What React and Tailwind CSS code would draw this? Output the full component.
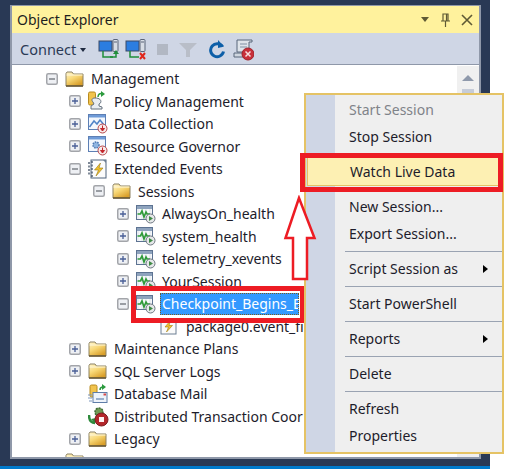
import React from "react";

const uiFont = "font-['Noto_Sans','Open_Sans',sans-serif]";

const indents = {
  0: "pl-[34px]",
  1: "pl-[57px]",
  2: "pl-[81px]",
  3: "pl-[105px]",
  4: "pl-[129px]",
};

function Expander({ open }) {
  return (
    <svg width="12" height="12" viewBox="0 0 12 12" className="shrink-0">
      <rect x="0.75" y="0.75" width="10.5" height="10.5" rx="1.5" fill="#eef0f4" stroke="#a3a5aa" strokeWidth="1.5" />
      <path d={open ? "M3 6h6" : "M3 6h6M6 3v6"} stroke={open ? "#6b7078" : "#4a5f96"} strokeWidth="1.3" />
    </svg>
  );
}

function Folder() {
  return (
    <svg width="19" height="16" viewBox="0 0 19 16">
      <defs>
        <linearGradient id="folderFill" x1="0" y1="0" x2="0.6" y2="1">
          <stop offset="0" stopColor="#fff6cf" />
          <stop offset="0.5" stopColor="#f8d877" />
          <stop offset="1" stopColor="#d99f2b" />
        </linearGradient>
      </defs>
      <path d="M1 2.5 2 1h5l1.5 2H18v12H1z" fill="url(#folderFill)" stroke="#8d8263" />
      <path d="M1.5 4h16" stroke="#fff8dc" />
      <path d="M1 15h17" stroke="#5f5030" strokeWidth="1.4" />
    </svg>
  );
}

function SessionIcon() {
  return (
    <svg width="20" height="20" viewBox="0 0 20 20">
      <rect x="0.5" y="1.5" width="16" height="14" fill="#f5f7fa" stroke="#5d7392" />
      <rect x="1" y="2" width="15" height="3" fill="#8ea3bd" />
      <path d="M2 5v10M6 5v10M10 5v10M14 5v10" stroke="#d5dbe4" strokeWidth="0.7" />
      <path d="M1.5 10h3l1.5-3 2 6 2-5 1 2h3" fill="none" stroke="#2f9a3a" strokeWidth="1.7" />
      <circle cx="14.5" cy="14.5" r="4.5" fill="#e6e8ea" stroke="#6d7680" />
      <path d="M13 12v5l4-2.500z" fill="#3f8a46" />
    </svg>
  );
}

function PackageIcon() {
  return (
    <svg width="18" height="18" viewBox="0 0 18 18">
      <rect x="1" y="2" width="15" height="15" fill="#fbfbfb" stroke="#6d7f93" />
      <path d="M10.500 3.500 5 10h3.500L6.500 15l6-6.500H9z" fill="#f1c232" stroke="#a37d12" strokeWidth="0.6" />
    </svg>
  );
}

function EventsIcon() {
  return (
    <svg width="19" height="20" viewBox="0 0 19 20">
      <rect x="3" y="1" width="15" height="18" fill="#fcfcfc" stroke="#51657e" />
      <path d="M1 3v14M4 2v16" stroke="#3c4c60" strokeWidth="1.3" strokeDasharray="2 1.500" />
      <path d="M12.500 4 6.500 11h4L8 17l7-8h-4z" fill="#f0c02c" stroke="#9b7a15" strokeWidth="0.6" />
      <path d="M15 1h3v3" fill="#6d7f93" />
    </svg>
  );
}

function PolicyIcon() {
  return (
    <svg width="19" height="20" viewBox="0 0 19 20">
      <rect x="0.500" y="1" width="7" height="13" rx="1.500" fill="#f1c34d" stroke="#b88a1f" />
      <path d="M7 7c-3 0-4 2-2 4l1 2-3 2v3h11v-2l-3-1 0-2c3-1 3-6-4-6z" fill="#e9edf2" stroke="#66727f" />
      <path d="M10 6c0-3 2-4 5-3" fill="none" stroke="#2b9a3d" strokeWidth="1.500" />
      <path d="m13 0 4 3-4 3z" fill="#2b9a3d" />
    </svg>
  );
}

function ChartIcon({ gear }) {
  return (
    <svg width="20" height="20" viewBox="0 0 20 20">
      <rect x="0.500" y="0.500" width="17" height="15" fill="#f3f7fd" stroke="#5d7fb4" />
      <rect x="1" y="1" width="16" height="2.500" fill="#6f9bd8" />
      {gear ? (
        <circle cx="8" cy="9" r="3" fill="#8fb4e0" stroke="#4f79b3" strokeWidth="1.500" strokeDasharray="1.500 1" />
      ) : (
        <path d="M1.500 13 6 7l3 3 3-4 4 5" fill="none" stroke="#4f83c8" strokeWidth="1.500" />
      )}
      <circle cx="14.500" cy="14.500" r="4.500" fill="#f6e9e9" stroke="#b8474a" />
      <path d="M14.500 11.500v3.500M12.500 14.500l2 2.500 2-2.500z" stroke="#c4262b" fill="#c4262b" />
    </svg>
  );
}

function MailIcon() {
  return (
    <svg width="20" height="20" viewBox="0 0 20 20">
      <rect x="2" y="1" width="7" height="12" rx="1.500" fill="#f1c34d" stroke="#b88a1f" />
      <path d="M12 6c0-2 1-3 3-3" fill="none" stroke="#2b9a3d" strokeWidth="1.500" />
      <path d="m14 0 4 3-4 3z" fill="#2b9a3d" />
      <rect x="5" y="8.500" width="14" height="10" fill="#eef3fa" stroke="#5f7da8" />
      <path d="M8 15h8" stroke="#7d97bd" strokeWidth="1.500" />
      <rect x="15.500" y="9.500" width="2.500" height="2" fill="#d54848" />
      <path d="M0 11h4M0 14h4M1 17h3" stroke="#7d97bd" />
    </svg>
  );
}

function DtcIcon() {
  return (
    <svg width="21" height="21" viewBox="0 0 21 21">
      <circle cx="11" cy="6" r="4" fill="#6f9a54" stroke="#3d6a33" strokeWidth="1.500" strokeDasharray="2 1" />
      <path d="M1 9c0 5 2 8 6 8" fill="none" stroke="#2e8a3c" strokeWidth="2.500" />
      <path d="m3 13 5-1-1 6z" fill="#2e8a3c" />
      <circle cx="13.500" cy="13.500" r="6.500" fill="#b3262b" stroke="#7b1b1f" />
      <rect x="11" y="11" width="5" height="5" fill="#fdf2f2" />
    </svg>
  );
}

const rows = [
  { level: 0, state: "open", icon: <Folder />, label: "Management" },
  { level: 1, state: "closed", icon: <PolicyIcon />, label: "Policy Management" },
  { level: 1, state: "closed", icon: <ChartIcon />, label: "Data Collection" },
  { level: 1, state: "closed", icon: <ChartIcon gear />, label: "Resource Governor" },
  { level: 1, state: "open", icon: <EventsIcon />, label: "Extended Events" },
  { level: 2, state: "open", icon: <Folder />, label: "Sessions" },
  { level: 3, state: "closed", icon: <SessionIcon />, label: "AlwaysOn_health" },
  { level: 3, state: "closed", icon: <SessionIcon />, label: "system_health" },
  { level: 3, state: "closed", icon: <SessionIcon />, label: "telemetry_xevents" },
  { level: 3, state: "closed", icon: <SessionIcon />, label: "YourSession" },
  { level: 3, state: "open", icon: <SessionIcon />, label: "Checkpoint_Begins_E", selected: true },
  { level: 4, icon: <PackageIcon />, label: "package0.event_fi" },
  { level: 1, state: "closed", icon: <Folder />, label: "Maintenance Plans" },
  { level: 1, state: "closed", icon: <Folder />, label: "SQL Server Logs" },
  { level: 1, icon: <MailIcon />, label: "Database Mail" },
  { level: 1, icon: <DtcIcon />, label: "Distributed Transaction Coor" },
  { level: 1, state: "closed", icon: <Folder />, label: "Legacy" },
  { level: 0, icon: <Folder />, label: "" },
];

function TreeRow({ row }) {
  return (
    <div className={`flex items-center h-[22.5px] whitespace-nowrap w-[292px] overflow-hidden ${indents[row.level]}`}>
      <div className="w-[19px] shrink-0 flex items-center">
        {row.state && <Expander open={row.state === "open"} />}
      </div>
      <div className="w-[26px] shrink-0 flex items-center">{row.icon}</div>
      <span
        className={
          row.selected
            ? "bg-[#3399ff] text-white h-[22px] leading-[22px] w-[139px] -ml-[2px] pl-[2px] overflow-hidden outline-1 outline-dotted outline-[#7a5a20] -outline-offset-1"
            : "text-[#1d1c2b]"
        }
      >
        {row.label}
      </span>
    </div>
  );
}

function ToolbarIcons() {
  const server = (
    <>
      <rect x="1" y="2" width="13" height="10" fill="#2b7de0" stroke="#3c4a66" />
      <rect x="15" y="0.500" width="5" height="12" rx="1" fill="#d8dde5" stroke="#5a6478" />
      <path d="M16 3h3" stroke="#5a6478" />
    </>
  );
  return (
    <div className="flex items-center ml-[12px]">
      <svg width="22" height="22" viewBox="0 0 22 22">
        {server}
        <path d="M5 12v6h10" fill="none" stroke="#1f8f3a" strokeWidth="1.500" />
        <path d="M12 18h6v-4" fill="none" stroke="#1f8f3a" strokeWidth="1.500" />
        <path d="m15 15 3-4 3 4z" fill="#1f8f3a" />
      </svg>
      <svg width="22" height="22" viewBox="0 0 22 22" className="ml-[5px]">
        {server}
        <path d="M5 12v6h9" fill="none" stroke="#1f8f3a" strokeWidth="1.500" />
        <path d="m15 14 5 6m0-6-5 6" stroke="#e0281c" strokeWidth="2" />
      </svg>
      <div className="w-[11px] h-[11px] bg-[#b2b8c3] ml-[10px]" />
      <svg width="18" height="16" viewBox="0 0 18 16" className="ml-[11px]">
        <path d="M0 1h18l-7 7v7H7V8z" fill="#b9bec8" />
      </svg>
      <svg width="17" height="19" viewBox="0 0 17 19" className="ml-[12px]">
        <path d="M13.500 6.500a6.500 6.500 0 1 0 1 5" fill="none" stroke="#0d5fa8" strokeWidth="3" />
        <path d="M9 0v8l6-1.500z" fill="#0d5fa8" />
      </svg>
      <svg width="21" height="22" viewBox="0 0 21 22" className="ml-[7px]">
        <path d="M4 1h15v2h-3v10H4z" fill="#dfe4ea" stroke="#59677a" />
        <path d="M7 5h7M7 8h7" stroke="#8090a3" />
        <path d="M1 14h11v4H1z" fill="#cfd6df" stroke="#59677a" />
        <circle cx="15" cy="15" r="6" fill="#c8303a" stroke="#a02028" />
        <path d="m12.500 12.500 5 5m0-5-5 5" stroke="#f7dede" strokeWidth="1.500" />
      </svg>
    </div>
  );
}

function MenuItem({ label, disabled, arrow }) {
  return (
    <div className="flex items-center h-[27px] pl-[43px] pr-[14px]">
      <span className={disabled ? "text-[#7f8389]" : "text-[#1d1c2b]"}>{label}</span>
      {arrow && <div className="ml-auto w-0 h-0 border-y-[4.5px] border-y-transparent border-l-[5px] border-l-black" />}
    </div>
  );
}

function MenuSep() {
  return (
    <div className="h-[8px] flex items-center pl-[39px]">
      <div className="w-full h-px bg-[#9aa3b2]" />
    </div>
  );
}

function ContextMenu() {
  return (
    <div className="absolute left-[304px] top-[93px] w-[200px] h-[361px] border-2 border-[#e5c365] bg-[#efefef] text-[14px] py-[1px]">
      <div className="absolute left-0 top-0 bottom-0 w-[29px] bg-[#cfd6e5]" />
      <div className="relative">
        <MenuItem label="Start Session" disabled />
        <MenuItem label="Stop Session" />
        <MenuSep />
        <div className="ml-[1px] mr-0 -my-px h-[29px] bg-[#fdf0b3] border border-[#e5c365] flex items-center pl-[42px] text-[#1d1c2b]">
          Watch Live Data
        </div>
        <MenuSep />
        <MenuItem label="New Session..." />
        <MenuItem label="Export Session..." />
        <MenuSep />
        <MenuItem label="Script Session as" arrow />
        <MenuSep />
        <MenuItem label="Start PowerShell" />
        <MenuSep />
        <MenuItem label="Reports" arrow />
        <MenuSep />
        <MenuItem label="Delete" />
        <MenuSep />
        <MenuItem label="Refresh" />
        <MenuItem label="Properties" />
      </div>
    </div>
  );
}

export default function App() {
  return (
    <div className={`relative w-[505px] h-[469px] bg-white overflow-hidden text-[14px] ${uiFont}`}>
      <div className="w-[490px] h-[466px] bg-[#293955] pt-[5px] pl-[10px] pr-[9px] pb-[7px]">
        <div className="h-full flex flex-col border-2 border-t border-[#8f98a9]">
          <div className="h-[27px] shrink-0 bg-[#fff29d] flex items-center pl-[5px] pr-[4px] text-[14px] text-[#1e1e1e]">
            <span>Object Explorer</span>
            <div className="ml-auto flex items-center">
              <div className="w-0 h-0 border-x-[4.5px] border-x-transparent border-t-[5px] border-t-[#5f5a35]" />
              <svg width="11" height="14" viewBox="0 0 11 14" className="ml-[11px]">
                <path d="M3 1h5v7H3zM1 8h9M5.500 8v6M6.500 1v7" fill="none" stroke="#5f5a35" strokeWidth="1.200" />
              </svg>
              <svg width="12" height="12" viewBox="0 0 12 12" className="ml-[10px] mr-[2px]">
                <path d="m1 1 10 10m0-10L1 11" stroke="#5f5a35" strokeWidth="1.600" />
              </svg>
            </div>
          </div>
          <div className="h-[32px] shrink-0 bg-[#cfd6e5] flex items-center pl-[8px] pt-[2px] border-b border-[#8f98a9]">
            <span className="text-[14.5px] text-[#2b3a55]">Connect</span>
            <div className="ml-[4px] w-0 h-0 border-x-[3.5px] border-x-transparent border-t-[4px] border-t-[#1f2a40]" />
            <ToolbarIcons />
          </div>
          <div className="relative flex-1 bg-white overflow-hidden pt-[2.5px]">
            {rows.map((row, i) => (
              <TreeRow key={i} row={row} />
            ))}
            <div className="absolute right-0 top-[1px] bottom-0 w-[22px] bg-[#f0f0f0] flex flex-col items-center">
              <div className="mt-[9px] w-0 h-0 border-x-[6px] border-x-transparent border-b-[6px] border-b-[#8f99ab]" />
              <div className="mt-[8px] w-[12px] h-[60px] bg-[#c6ccd8]" />
            </div>
          </div>
        </div>
      </div>
      <div className="w-[490px] h-[3px] bg-[#007acc]" />

      <div className="absolute left-[131px] top-[286px] w-[174px] h-[37px] border-[5px] border-[#ed1c24]" />
      <ContextMenu />
      <div className="absolute left-[300px] top-[153px] w-[203px] h-[39px] border-[5px] border-[#ed1c24]" />
      <svg className="absolute left-[283px] top-[195px]" width="34" height="88" viewBox="0 0 34 88">
        <path d="M16 3 2.500 43H10v41h14V43h7.500z" fill="#fff" stroke="#ed1c24" strokeWidth="2.500" />
      </svg>
    </div>
  );
}
